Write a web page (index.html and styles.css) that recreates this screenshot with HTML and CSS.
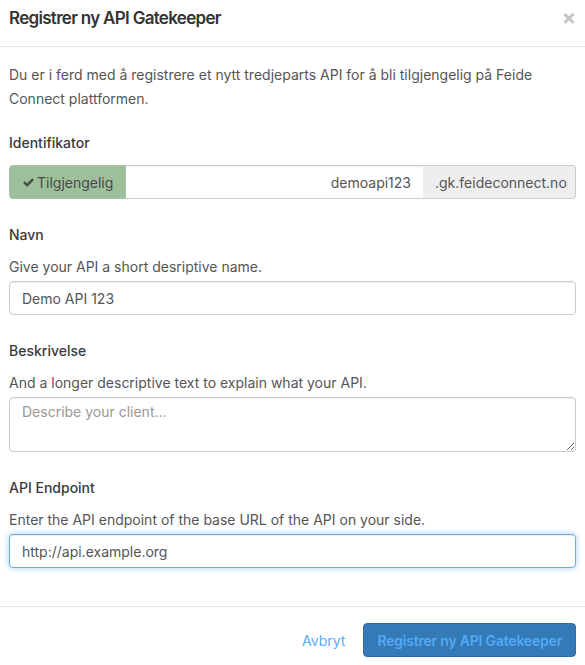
FILE: index.html
```html
<!DOCTYPE html>
<html>
<head>
<meta charset="utf-8">
<link rel="stylesheet" href="styles.css">
</head>
<body>
<div class="modal">
  <div class="modal-header">
    <h4 class="modal-title">Registrer ny API Gatekeeper</h4>
    <span class="close">×</span>
  </div>
  <div class="modal-body">
    <p class="intro">Du er i ferd med å registrere et nytt tredjeparts API for å bli tilgjengelig på Feide Connect plattformen.</p>

    <div class="form-group">
      <label class="lbl lbl-id">Identifikator</label>
      <div class="input-group">
        <span class="addon addon-ok"><svg class="check" viewBox="0 0 16 16" width="13" height="13"><path d="M1.5 8.6 L3.6 6.5 L6.3 9.2 L12.6 2.9 L14.7 5 L6.3 13.4 Z" fill="#4a4a4a"/></svg>Tilgjengelig</span>
        <input class="ctl ctl-mid" type="text" value="demoapi123">
        <span class="addon addon-suffix">.gk.feideconnect.no</span>
      </div>
    </div>

    <div class="form-group">
      <label class="lbl">Navn</label>
      <p class="help">Give your API a short desriptive name.</p>
      <input class="ctl" type="text" value="Demo API 123">
    </div>

    <div class="form-group">
      <label class="lbl">Beskrivelse</label>
      <p class="help">And a longer descriptive text to explain what your API.</p>
      <textarea class="ctl area" placeholder="Describe your client..."></textarea>
    </div>

    <div class="form-group">
      <label class="lbl">API Endpoint</label>
      <p class="help">Enter the API endpoint of the base URL of the API on your side.</p>
      <input class="ctl focus" type="text" value="http://api.example.org">
    </div>
  </div>
  <div class="modal-footer">
    <a class="cancel">Avbryt</a>
    <button class="btn-primary">Registrer ny API Gatekeeper</button>
  </div>
</div>
</body>
</html>
```

FILE: styles.css
```css
* { box-sizing: border-box; }
html, body { margin: 0; padding: 0; background: #fff; }
body {
  font-family: Inter, Roboto, "Liberation Sans", sans-serif;
  font-size: 14px;
  color: #555;
  width: 585px;
  height: 665px;
  overflow: hidden;
}
.modal { width: 585px; }
.modal-header {
  display: flex;
  align-items: center;
  justify-content: space-between;
  height: 47px;
  padding: 0 9px 10px 9px;
  border-bottom: 1px solid #e5e5e5;
}
.modal-title {
  margin: 0;
  font-size: 17px;
  font-weight: 600;
  letter-spacing: -0.7px;
  color: #333;
  line-height: 26px;
}
.close {
  font-size: 21px;
  font-weight: 700;
  color: #c4c4c4;
  line-height: 26px;
}
.modal-body { padding: 16px 9px 0 9px; }
.intro { margin: 0 0 22px 0; line-height: 24px; }
.form-group { margin-bottom: 26px; }
.form-group:last-child { margin-bottom: 0; }
.lbl {
  display: block;
  font-weight: 500;
  color: #3a3a3a;
  line-height: 20px;
  margin-bottom: 10px;
}
.lbl-id { margin-bottom: 12px; }
.help { margin: 0 0 2px 0; line-height: 24px; }
.input-group { display: flex; height: 34px; }
.addon {
  display: flex;
  align-items: center;
  border: 1px solid #ccc;
  font-size: 14px;
  color: #555;
}
.addon-ok {
  width: 117px;
  background: #9dc09b;
  border-radius: 4px 0 0 4px;
  padding-left: 12px;
  border-color: #a8c4a6;
  color: #4a4a4a;
}
.check { margin-right: 2px; }
.addon-suffix {
  width: 153px;
  background: #eee;
  border-left: 0;
  border-radius: 0 4px 4px 0;
  padding-left: 12px;
}
.ctl {
  display: block;
  width: 100%;
  height: 34px;
  padding: 6px 12px;
  font-family: inherit;
  font-size: 14px;
  color: #555;
  background: #fff;
  border: 1px solid #ccc;
  border-radius: 4px;
  box-shadow: inset 0 1px 1px rgba(0,0,0,.075);
  outline: none;
}
.ctl-mid {
  flex: 1;
  width: auto;
  border-radius: 0;
  border-left: 0;
  border-right: 0;
  text-align: right;
}
.area {
  height: 55px;
  resize: vertical;
  padding-top: 5px;
}
.area::placeholder { color: #999; }
.focus {
  border-color: #66afe9;
  box-shadow: inset 0 1px 1px rgba(0,0,0,.075), 0 0 6px rgba(102,175,233,.6);
}
.modal-footer {
  margin-top: 38px;
  border-top: 1px solid #e5e5e5;
  display: flex;
  justify-content: flex-end;
  align-items: center;
  padding: 16px 9px 0 9px;
  gap: 18px;
}
.cancel {
  color: #5aabf0;
  font-size: 14px;
  cursor: pointer;
}
.btn-primary {
  height: 34px;
  padding: 0 13px;
  background: #337ab7;
  border: 1px solid #2e6da4;
  border-radius: 4px;
  color: #55a9f3;
  font-family: inherit;
  font-size: 14px;
  font-weight: 600;
  letter-spacing: -0.2px;
}
```
